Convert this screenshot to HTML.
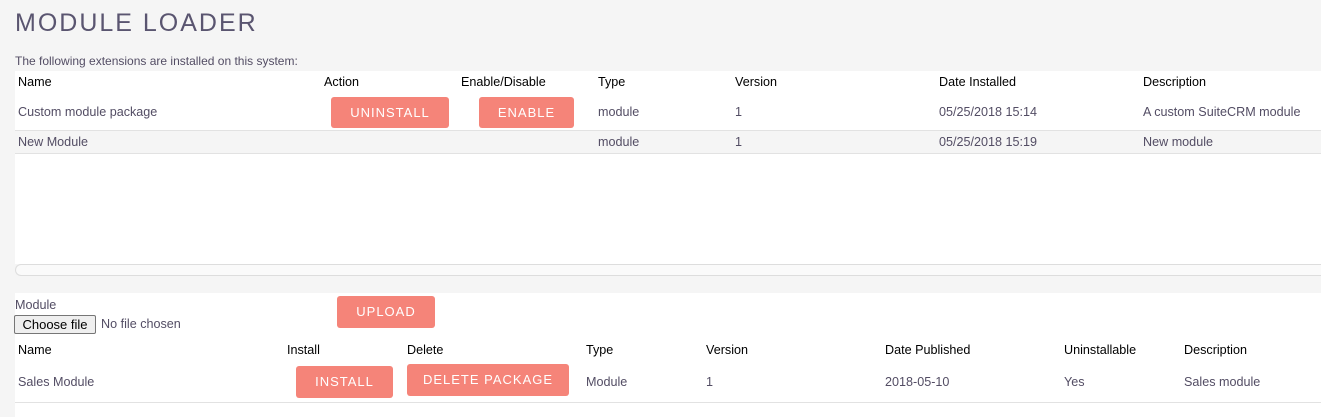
<!DOCTYPE html>
<html><head><style>
body{margin:0;width:1321px;height:417px;background:#f5f5f5;font-family:"Liberation Sans",sans-serif;font-size:12.6px;color:#534d64;position:relative;overflow:hidden}
.a{position:absolute;white-space:nowrap}
.h{color:#000}
.btn{position:absolute;background:#f58479;color:#fff;border-radius:3px;text-align:center;font-size:13px;letter-spacing:1px}
.w{position:absolute;background:#fff}
</style></head><body>
<div class="a" style="left:15px;top:9px;font-size:25px;letter-spacing:2px;font-weight:300;color:#5a5570">MODULE LOADER</div>
<div class="a" style="left:15px;top:54px;font-size:12px">The following extensions are installed on this system:</div>
<div class="w" style="left:15px;top:71px;width:1306px;height:193px"></div>
<div class="a" style="left:15px;top:130px;width:1306px;height:24px;background:#f5f5f5;border-top:1px solid #e2e2e2;border-bottom:1px solid #e2e2e2;box-sizing:border-box"></div>
<div class="a h" style="left:18px;top:75px">Name</div>
<div class="a h" style="left:324px;top:75px">Action</div>
<div class="a h" style="left:461px;top:75px">Enable/Disable</div>
<div class="a h" style="left:598px;top:75px">Type</div>
<div class="a h" style="left:735px;top:75px">Version</div>
<div class="a h" style="left:939px;top:75px">Date Installed</div>
<div class="a h" style="left:1143px;top:75px">Description</div>
<div class="a" style="left:18px;top:105px">Custom module package</div>
<div class="btn" style="left:331px;top:97px;width:118px;height:31px;line-height:31px">UNINSTALL</div>
<div class="btn" style="left:479px;top:97px;width:95px;height:31px;line-height:31px">ENABLE</div>
<div class="a" style="left:598px;top:105px">module</div>
<div class="a" style="left:735px;top:105px">1</div>
<div class="a" style="left:939px;top:105px">05/25/2018 15:14</div>
<div class="a" style="left:1143px;top:105px">A custom SuiteCRM module</div>
<div class="a" style="left:18px;top:135px">New Module</div>
<div class="a" style="left:598px;top:135px">module</div>
<div class="a" style="left:735px;top:135px">1</div>
<div class="a" style="left:939px;top:135px">05/25/2018 15:19</div>
<div class="a" style="left:1143px;top:135px">New module</div>
<div class="a" style="left:15px;top:264px;width:1306px;height:12px;background:#fafafa;border-top:1px solid #ddd;border-bottom:1px solid #ddd;border-left:1px solid #ddd;border-radius:6px 0 0 6px;box-sizing:border-box"></div>
<div class="w" style="left:15px;top:293px;width:1306px;height:124px"></div>
<div class="a" style="left:15px;top:298px">Module</div>
<div class="a" style="left:14px;top:315px;width:82px;height:19px;background:#efefef;border:1px solid #767676;border-radius:2px;box-sizing:border-box;color:#000;text-align:center;line-height:17px;font-size:13px">Choose file</div>
<div class="a" style="left:101px;top:317px">No file chosen</div>
<div class="btn" style="left:337px;top:296px;width:98px;height:32px;line-height:32px">UPLOAD</div>
<div class="a h" style="left:18px;top:343px">Name</div>
<div class="a h" style="left:287px;top:343px">Install</div>
<div class="a h" style="left:407px;top:343px">Delete</div>
<div class="a h" style="left:586px;top:343px">Type</div>
<div class="a h" style="left:706px;top:343px">Version</div>
<div class="a h" style="left:885px;top:343px">Date Published</div>
<div class="a h" style="left:1064px;top:343px">Uninstallable</div>
<div class="a h" style="left:1184px;top:343px">Description</div>
<div class="a" style="left:18px;top:375px">Sales Module</div>
<div class="btn" style="left:296px;top:366px;width:97px;height:32px;line-height:32px">INSTALL</div>
<div class="btn" style="left:407px;top:364px;width:162px;height:32px;line-height:32px">DELETE PACKAGE</div>
<div class="a" style="left:586px;top:375px">Module</div>
<div class="a" style="left:706px;top:375px">1</div>
<div class="a" style="left:885px;top:375px">2018-05-10</div>
<div class="a" style="left:1064px;top:375px">Yes</div>
<div class="a" style="left:1184px;top:375px">Sales module</div>
<div class="a" style="left:15px;top:402px;width:1306px;height:1px;background:#e2e2e2"></div>
</body></html>
